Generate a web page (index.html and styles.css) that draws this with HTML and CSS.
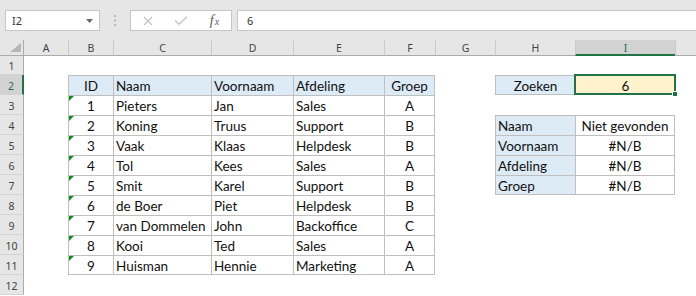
FILE: index.html
```html
<!DOCTYPE html>
<html lang="nl">
<head>
<meta charset="utf-8">
<title>Zoeken</title>
<link rel="stylesheet" href="styles.css">
</head>
<body>
<div class="toolbar">
  <div class="namebox"><span>I2</span>
    <svg class="dd" width="7" height="4" viewBox="0 0 7 4"><path d="M0 0H7L3.5 4Z" fill="#6a6a6a"/></svg>
  </div>
  <div class="grip">
    <svg width="2" height="11" viewBox="0 0 2 11"><rect x="0" y="0" width="2" height="2" fill="#b8b8b8"/><rect x="0" y="4.5" width="2" height="2" fill="#b8b8b8"/><rect x="0" y="9" width="2" height="2" fill="#b8b8b8"/></svg>
  </div>
  <div class="fxbtns">
    <span class="btn"><svg width="10" height="10" viewBox="0 0 10 10"><path d="M1 1L9 9M9 1L1 9" stroke="#c2c2c2" stroke-width="1.2" fill="none"/></svg></span>
    <span class="btn"><svg width="14" height="9" viewBox="0 0 14 9"><path d="M1 4.5L5 8.2L13 0.8" stroke="#c2c2c2" stroke-width="1.3" fill="none"/></svg></span>
    <span class="btn fx">f<span class="fxx">x</span></span>
  </div>
  <div class="formula">6</div>
</div>

<div class="sheet">
  <div class="corner"><svg width="11" height="9" viewBox="0 0 11 9"><path d="M11 0V9H0Z" fill="#b5b5b5"/></svg></div>
  <div class="colheads">
    <div class="ch">A</div><div class="ch">B</div><div class="ch">C</div><div class="ch">D</div><div class="ch">E</div><div class="ch">F</div><div class="ch">G</div><div class="ch">H</div><div class="ch sel">I</div><div class="ch"></div>
  </div>
  <div class="rowheads">
    <div class="rh">1</div><div class="rh sel">2</div><div class="rh">3</div><div class="rh">4</div><div class="rh">5</div><div class="rh">6</div><div class="rh">7</div><div class="rh">8</div><div class="rh">9</div><div class="rh">10</div><div class="rh">11</div><div class="rh">12</div>
  </div>

  <div class="tbl data">
    <div class="c hd ctr">ID</div><div class="c hd">Naam</div><div class="c hd">Voornaam</div><div class="c hd">Afdeling</div><div class="c hd ctr">Groep</div>
    <div class="c ctr tx">1</div><div class="c">Pieters</div><div class="c">Jan</div><div class="c">Sales</div><div class="c ctr">A</div>
    <div class="c ctr tx">2</div><div class="c">Koning</div><div class="c">Truus</div><div class="c">Support</div><div class="c ctr">B</div>
    <div class="c ctr tx">3</div><div class="c">Vaak</div><div class="c">Klaas</div><div class="c">Helpdesk</div><div class="c ctr">B</div>
    <div class="c ctr tx">4</div><div class="c">Tol</div><div class="c">Kees</div><div class="c">Sales</div><div class="c ctr">A</div>
    <div class="c ctr tx">5</div><div class="c">Smit</div><div class="c">Karel</div><div class="c">Support</div><div class="c ctr">B</div>
    <div class="c ctr tx">6</div><div class="c">de Boer</div><div class="c">Piet</div><div class="c">Helpdesk</div><div class="c ctr">B</div>
    <div class="c ctr tx">7</div><div class="c">van Dommelen</div><div class="c">John</div><div class="c">Backoffice</div><div class="c ctr">C</div>
    <div class="c ctr tx">8</div><div class="c">Kooi</div><div class="c">Ted</div><div class="c">Sales</div><div class="c ctr">A</div>
    <div class="c ctr tx">9</div><div class="c">Huisman</div><div class="c">Hennie</div><div class="c">Marketing</div><div class="c ctr">A</div>
  </div>

  <div class="tbl zoek">
    <div class="c hd ctr">Zoeken</div>
    <div class="c ctr input">6<span class="selbox"></span><span class="handle"></span></div>
  </div>

  <div class="tbl lookup">
    <div class="c hd">Naam</div><div class="c ctr">Niet gevonden</div>
    <div class="c hd">Voornaam</div><div class="c ctr">#N/B</div>
    <div class="c hd">Afdeling</div><div class="c ctr">#N/B</div>
    <div class="c hd">Groep</div><div class="c ctr">#N/B</div>
  </div>
</div>
</body>
</html>
```

FILE: styles.css
```css
* { box-sizing: border-box; margin: 0; padding: 0; }
html, body { width: 696px; height: 296px; overflow: hidden; }
body { background: #e6e6e6; font-family: "Noto Sans", sans-serif; color: #222; }

/* ---------- toolbar ---------- */
.toolbar { height: 40px; display: flex; align-items: flex-start; padding: 10px 0 0 5px; }
.namebox {
  width: 95px; height: 21px; background: #fff; border: 1px solid #c6c6c6;
  display: flex; align-items: center; justify-content: space-between;
  padding: 0 6px 0 6px; font-size: 11px; color: #333;
}
.dd { margin-top: 1px; }
.grip { width: 30px; height: 21px; display: flex; align-items: center; justify-content: center; }
.fxbtns {
  width: 102px; height: 21px; background: #fff; border: 1px solid #c6c6c6;
  display: flex; align-items: center;
}
.btn { width: 33px; height: 19px; display: flex; align-items: center; justify-content: center; }
.fx { font-family: "Liberation Serif", serif; font-style: italic; font-size: 14px; color: #5a5a5a; padding-left: 2px; }
.fxx { font-size: 10px; margin-left: 1px; position: relative; top: 1px; }
.formula {
  flex: 1; height: 21px; margin-left: 5px; background: #fff;
  border: 1px solid #c6c6c6; border-right: none;
  display: flex; align-items: center; padding-left: 9px; font-size: 11px; color: #333;
}

/* ---------- sheet ---------- */
.sheet {
  display: grid;
  grid-template-columns: 24px 44px 45px 98px 82px 91px 51px 60px 80px 100px 1fr;
  grid-template-rows: 16px 19px repeat(11, 20px) 1fr;
  height: 256px;
  background: #fff;
}
.corner {
  grid-column: 1; grid-row: 1; background: #e6e6e6;
  border-right: 1px solid #ababab; border-bottom: 1px solid #ababab;
  display: flex; align-items: flex-end; justify-content: flex-end; padding: 0 2px 3px 0;
}
.colheads {
  grid-column: 2 / 12; grid-row: 1;
  display: grid; grid-template-columns: subgrid;
}
.ch {
  background: #e6e6e6; border-left: 1px solid #cacaca; border-bottom: 1px solid #ababab;
  display: flex; align-items: flex-end; justify-content: center;
  font-size: 10.5px; line-height: 12px; padding-bottom: 1px; color: #444;
}
.ch:first-child { border-left: none; }
.ch.sel { background: #d2d2d2; border-bottom: 2px solid #217346; color: #217346; padding-bottom: 0; }

.rowheads {
  grid-column: 1; grid-row: 2 / 14;
  display: grid; grid-template-rows: subgrid;
}
.rh {
  background: #e6e6e6; border-right: 1px solid #ababab; border-bottom: 1px solid #d4d4d4;
  display: flex; align-items: flex-end; justify-content: center;
  font-size: 10.5px; line-height: 12px; padding-bottom: 2px; color: #444;
}
.rh.sel { background: #d2d2d2; border-right: 2px solid #217346; color: #217346; }

/* ---------- cell tables ---------- */
.tbl { display: grid; grid-template-columns: subgrid; grid-template-rows: subgrid; }
.data { grid-column: 3 / 8; grid-row: 3 / 13; }
.zoek { grid-column: 9 / 11; grid-row: 3; }
.lookup { grid-column: 9 / 11; grid-row: 5 / 9; }

.c {
  position: relative;
  border-left: 1px solid #bfbfbf; border-top: 1px solid #bfbfbf;
  font-family: "Lato", sans-serif; font-size: 13.5px; line-height: 18px;
  padding: 1px 0 0 2px; color: #111; white-space: nowrap;
}
.ctr { text-align: center; padding-left: 0; }
.hd { background: #ddebf7; }
.data > :nth-child(5n) { border-right: 1px solid #bfbfbf; }
.data > :nth-last-child(-n+5) { border-bottom: 1px solid #bfbfbf; }
.zoek > * { border-bottom: 1px solid #bfbfbf; }
.lookup > :nth-child(2n) { border-right: 1px solid #bfbfbf; }
.lookup > :nth-last-child(-n+2) { border-bottom: 1px solid #bfbfbf; }

.tx::before {
  content: ""; position: absolute; top: 0; left: 0; width: 5px; height: 5px;
  background: #178a17; clip-path: polygon(0 0, 100% 0, 0 100%);
}

.input { background: #fff2cc; }
.selbox {
  position: absolute; top: -2px; left: -2px; right: -1px; bottom: -1px;
  border: 2px solid #217346;
}
.handle {
  position: absolute; right: -3px; bottom: -3px; width: 6px; height: 6px;
  background: #217346; border: 1px solid #fff;
}
```
